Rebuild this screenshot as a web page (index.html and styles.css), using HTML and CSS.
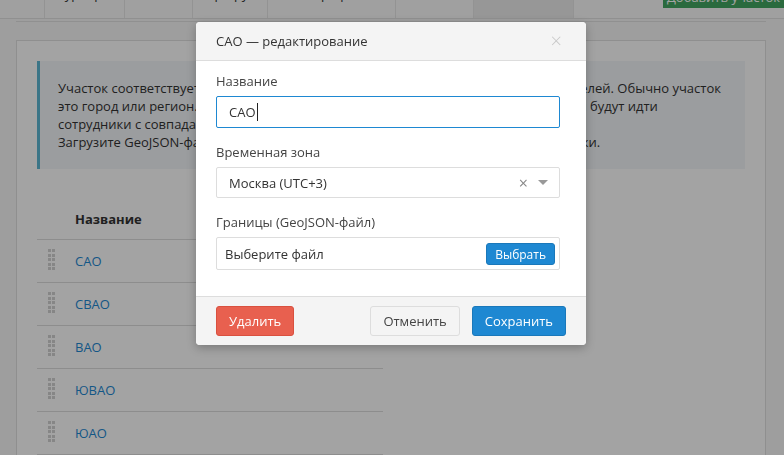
FILE: index.html
```html
<!DOCTYPE html>
<html>
<head>
    <title>Участки</title>
    <link rel="stylesheet" href="styles.css">
</head>
<body>
    <div class="tabs">
        <div class="tab" style="width:45px">Зоны</div>
        <div class="tab" style="width:80px">Курьеры</div>
        <div class="tab" style="width:68px">Заказы</div>
        <div class="tab" style="width:75px">Маршруты</div>
        <div class="tab" style="width:128px">Тарифы</div>
        <div class="tab" style="width:78px">Отчёты</div>
        <div class="tab active" style="width:100px">Участки</div>
        <div class="tab-spacer"></div>
        <div class="btn-add">Добавить участок</div>
    </div>

    <div class="content">
        <div class="panel">
            <div class="callout">
                Участок соответствует территории работы выездных курьеров и адресов получателей. Обычно участок<br>
                это город или регион. Заказы распределяются по участкам и к адресу получателей будут идти<br>
                сотрудники с совпадающим участком.<br>
                Загрузите GeoJSON-файл, чтобы автоматически определять участок по адресу точки.
            </div>

            <table class="zones">
                <thead>
                    <tr><th class="handle-col"></th><th>Название</th></tr>
                </thead>
                <tbody>
                    <tr><td class="handle-col"><span class="handle"></span></td><td><a href="#">САО</a></td></tr>
                    <tr><td class="handle-col"><span class="handle"></span></td><td><a href="#">СВАО</a></td></tr>
                    <tr><td class="handle-col"><span class="handle"></span></td><td><a href="#">ВАО</a></td></tr>
                    <tr><td class="handle-col"><span class="handle"></span></td><td><a href="#">ЮВАО</a></td></tr>
                    <tr><td class="handle-col"><span class="handle"></span></td><td><a href="#">ЮАО</a></td></tr>
                </tbody>
            </table>
        </div>
    </div>

    <div class="backdrop"></div>

    <div class="modal">
        <div class="modal-header">
            <span>САО — редактирование</span>
            <span class="close">&times;</span>
        </div>
        <div class="modal-body">
            <label class="label">Название</label>
            <div class="input focused">САО<span class="caret"></span></div>

            <label class="label">Временная зона</label>
            <div class="input select">
                <span>Москва (UTC+3)</span>
                <span class="select-clear">&times;</span>
                <span class="select-arrow"></span>
            </div>

            <label class="label">Границы (GeoJSON-файл)</label>
            <div class="input file">
                <span>Выберите файл</span>
                <span class="btn-small">Выбрать</span>
            </div>
        </div>
        <div class="modal-footer">
            <button class="btn btn-danger">Удалить</button>
            <span class="footer-spacer"></span>
            <button class="btn btn-default">Отменить</button>
            <button class="btn btn-primary">Сохранить</button>
        </div>
    </div>
</body>
</html>
```

FILE: styles.css
```css
body {
    margin: 0;
    font-family: "Open Sans", Arial, sans-serif;
    font-size: 13px;
    color: #333;
    background: #f7f7f7;
    height: 455px;
    overflow: hidden;
}

.tabs {
    display: flex;
    height: 18px;
    border-bottom: 1px solid #e2e2e2;
    background: #fafafa;
}

.tab {
    border-right: 1px solid #e6e6e6;
    box-sizing: border-box;
    line-height: 18px;
    margin-top: -15px;
    height: 33px;
    text-align: center;
    color: #333;
    overflow: hidden;
}

.tab.active {
    background: #ececec;
}

.tab-spacer {
    flex: 1;
}

.btn-add {
    width: 121px;
    height: 20px;
    margin-top: -12px;
    background: #42a661;
    color: white;
    font-size: 13px;
    line-height: 18px;
    text-align: center;
    overflow: hidden;
}

.content {
    margin: 2px 18px 0 16px;
    border-top: 1px solid #e2e2e2;
    padding-top: 18px;
}

.panel {
    background: #fff;
    border: 1px solid #e0e0e0;
    padding: 20px;
    height: 500px;
}

.callout {
    background: #f3f6f9;
    border-left: 3px solid #5db7d4;
    padding: 18px 20px 18px 18px;
    line-height: 18px;
    white-space: nowrap;
    overflow: hidden;
}

.zones {
    margin-top: 30px;
    width: 346px;
    border-collapse: collapse;
}

.zones th {
    text-align: left;
    font-weight: bold;
    padding: 10px 0;
    line-height: 20px;
    border-bottom: 1px solid #ddd;
}

.zones td {
    height: 42px;
    padding: 0;
    border-bottom: 1px solid #ddd;
    vertical-align: middle;
}

.zones .handle-col {
    width: 27px;
    padding-left: 11px;
}

.zones a {
    color: #1e88d2;
    text-decoration: none;
}

.handle {
    display: block;
    width: 7px;
    height: 22px;
    margin-top: -2px;
    background: linear-gradient(90deg, #d2d2d2 3px, transparent 3px, transparent 4px, #d2d2d2 4px);
    -webkit-mask: repeating-linear-gradient(180deg, #000 0, #000 3px, transparent 3px, transparent 4.6px);
    mask: repeating-linear-gradient(180deg, #000 0, #000 3px, transparent 3px, transparent 4.6px);
}

.backdrop {
    position: fixed;
    inset: 0;
    background: rgba(0, 0, 0, 0.36);
}

.modal {
    position: absolute;
    left: 196px;
    top: 22px;
    width: 390px;
    background: #fff;
    border-radius: 4px;
    box-shadow: 0 3px 10px rgba(0, 0, 0, 0.25);
    overflow: hidden;
}

.modal-header {
    display: flex;
    align-items: center;
    justify-content: space-between;
    height: 38px;
    padding: 0 24px 0 20px;
    background: #f4f4f4;
    border-bottom: 1px solid #ddd;
}

.close {
    color: #c8c8c8;
    font-size: 20px;
    font-weight: 300;
    line-height: 1;
}

.modal-body {
    padding: 11px 26px 26px 20px;
}

.label {
    display: block;
    line-height: 18px;
    margin-bottom: 6px;
    color: #444;
}

.input {
    display: flex;
    align-items: center;
    box-sizing: border-box;
    height: 32px;
    border: 1px solid #ddd;
    border-radius: 2px;
    padding: 0 12px;
    margin-bottom: 15px;
    color: #333;
}

.input.focused {
    border-color: #1e88d2;
}

.caret {
    display: inline-block;
    width: 1px;
    height: 18px;
    background: #222;
    margin-left: 1px;
}

.input.select {
    height: 31px;
    margin-bottom: 15px;
}

.select-clear {
    margin-left: auto;
    color: #888;
    font-size: 16px;
    line-height: 1;
}

.select-arrow {
    margin-left: 10px;
    margin-right: -1px;
    width: 0;
    height: 0;
    border-left: 5px solid transparent;
    border-right: 5px solid transparent;
    border-top: 5px solid #999;
}

.input.file {
    height: 33px;
    padding: 0 4px 0 8px;
    margin-bottom: 0;
    justify-content: space-between;
}

.btn-small {
    background: #1e88d2;
    color: #fff;
    font-size: 12px;
    height: 22px;
    line-height: 21px;
    padding: 0 8px;
    border-radius: 3px;
    border: 1px solid #1a78ba;
    box-sizing: border-box;
}

.modal-footer {
    display: flex;
    align-items: center;
    gap: 12px;
    padding: 9px 20px 9px;
    background: #f4f4f4;
    border-top: 1px solid #ddd;
}

.footer-spacer {
    flex: 1;
}

.btn {
    font-family: "Open Sans", Arial, sans-serif;
    font-size: 13px;
    height: 30px;
    padding: 0 12px;
    border-radius: 3px;
    border: 1px solid transparent;
    cursor: pointer;
}

.btn-danger {
    background: #e8604f;
    border-color: #d9503f;
    color: #fff;
}

.btn-default {
    background: #f4f4f4;
    border-color: #ddd;
    color: #444;
}

.btn-primary {
    background: #1e88d2;
    border-color: #1a78ba;
    color: #fff;
}
```
